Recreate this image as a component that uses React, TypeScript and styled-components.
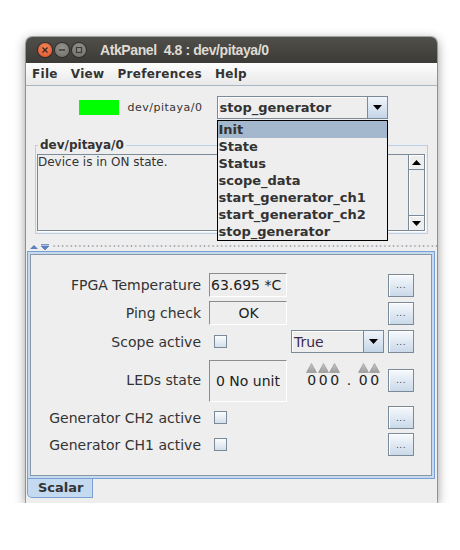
import styled, { createGlobalStyle } from "styled-components";

const GlobalStyle = createGlobalStyle`
  body {
    margin: 0;
    background: #ffffff;
    font-family: "DejaVu Sans", sans-serif;
    color: #333333;
  }
`;

const Window = styled.div`
  margin: 37px 0 0 26px;
  width: 411px;
  height: 466px;
  display: flex;
  flex-direction: column;
  background: #eeeeee;
  border-radius: 6px 6px 0 0;
  box-shadow: 0 0 0 1px rgba(0, 0, 0, 0.28), 0 3px 12px rgba(0, 0, 0, 0.45);
  overflow: hidden;
`;

const TitleBar = styled.div`
  height: 26px;
  flex: none;
  display: flex;
  align-items: center;
  padding-left: 12px;
  background: linear-gradient(#504f4a, #3c3b37);
`;

const WinButton = styled.div<{ $close?: boolean }>`
  width: 14px;
  height: 14px;
  border-radius: 50%;
  margin-right: 3px;
  display: flex;
  align-items: center;
  justify-content: center;
  background: ${(p) =>
    p.$close
      ? "radial-gradient(circle at 50% 35%, #f6875c, #df4f26)"
      : "radial-gradient(circle at 50% 35%, #95948f, #6c6b66)"};
  box-shadow: 0 0 0 1px rgba(0, 0, 0, 0.35);
`;

const Title = styled.div`
  margin-left: 11px;
  font-family: "Liberation Sans", sans-serif;
  font-weight: bold;
  font-size: 14px;
  letter-spacing: -0.4px;
  color: #dfdbd2;
  white-space: pre;
`;

const MenuBar = styled.div`
  height: 22px;
  flex: none;
  display: flex;
  align-items: center;
  gap: 13px;
  padding-left: 6px;
  background: linear-gradient(#fdfdfd, #e9e9e9);
  border-bottom: 1px solid #a9b6c4;
`;

const MenuItem = styled.span`
  font-weight: bold;
  font-size: 12px;
  letter-spacing: 0.3px;
  color: #333333;
`;

const TopPanel = styled.div`
  flex: none;
  padding: 10px 9px 9px 9px;
  display: flex;
  flex-direction: column;
`;

const DeviceRow = styled.div`
  height: 23px;
  padding-left: 4px;
  display: flex;
  align-items: center;
  justify-content: center;
`;

const StateLed = styled.div`
  width: 40px;
  height: 15px;
  background: #00ff00;
  margin-right: 8px;
`;

const DeviceName = styled.span`
  font-size: 11px;
  letter-spacing: 0.5px;
  color: #333333;
  margin-right: 14px;
`;

const Combo = styled.div<{ $width: number }>`
  position: relative;
  width: ${(p) => p.$width}px;
  height: 23px;
  box-sizing: border-box;
  border: 1px solid #7a8a99;
  display: flex;
  background: #eeeeee;
  box-shadow: inset 1px 1px 0 #ffffff;
`;

const ComboText = styled.div<{ $bold?: boolean }>`
  flex: 1;
  display: flex;
  align-items: center;
  padding-left: 2px;
  font-size: ${(p) => (p.$bold ? "13px" : "14px")};
  font-weight: ${(p) => (p.$bold ? "bold" : "normal")};
  color: ${(p) => (p.$bold ? "#333333" : "#3e2a4c")};
`;

const ComboArrow = styled.div`
  width: 19px;
  border-left: 1px solid #7a8a99;
  background: linear-gradient(#f1f5fa, #c3d5e7);
  display: flex;
  align-items: center;
  justify-content: center;
`;

const DropList = styled.ul`
  position: absolute;
  top: 23px;
  left: -1px;
  width: 171px;
  box-sizing: border-box;
  margin: 0;
  padding: 0;
  list-style: none;
  border: 1px solid #000000;
  background: #eeeeee;
  z-index: 5;
`;

const DropItem = styled.li<{ $selected?: boolean }>`
  height: 17px;
  line-height: 17px;
  padding-left: 1px;
  font-weight: bold;
  font-size: 13px;
  color: #333333;
  background: ${(p) => (p.$selected ? "#a3b8cc" : "transparent")};
`;

const StatusBox = styled.fieldset`
  margin: 19px 0 0 0;
  padding: 0 2px 2px 1px;
  border: 1px solid #b8cfe5;
  min-width: 0;
`;

const StatusTitle = styled.legend`
  margin-left: 1px;
  padding: 0 2px;
  font-weight: bold;
  font-size: 12px;
  line-height: 14px;
  color: #333333;
`;

const ScrollPane = styled.div`
  margin-top: 2px;
  height: 77px;
  box-sizing: border-box;
  border: 1px solid #7a8a99;
  box-shadow: 1px 1px 0 #ffffff;
  display: flex;
`;

const StatusText = styled.div`
  flex: 1;
  font-size: 12px;
  line-height: 15px;
  color: #333333;
`;

const ScrollBar = styled.div`
  width: 15px;
  display: flex;
  flex-direction: column;
  border-left: 1px solid #7a8a99;
  background: #eeeeee;
`;

const ScrollButton = styled.div`
  height: 15px;
  box-sizing: border-box;
  border-bottom: 1px solid #7a8a99;
  display: flex;
  align-items: center;
  justify-content: center;
  background: #eeeeee;
  box-shadow: inset 1px 1px 0 #ffffff;
  &:last-child {
    border-bottom: none;
    border-top: 1px solid #7a8a99;
  }
`;

const ScrollTrack = styled.div`
  flex: 1;
  box-shadow: inset 1px 0 0 #ffffff;
`;

const Divider = styled.div`
  height: 8px;
  flex: none;
  display: flex;
  align-items: center;
  padding-left: 4px;
`;

const DividerDots = styled.div`
  flex: 1;
  height: 8px;
  margin-left: 2px;
  background-image: radial-gradient(circle, #9ea6ae 0.7px, transparent 1.1px);
  background-size: 4.3px 8px;
  background-position: 0 -1px;
`;

const TabPane = styled.div`
  flex: none;
  display: flex;
  flex-direction: column;
  margin: 0 2px 0 1px;
`;

const TabContent = styled.div`
  border: 1px solid #7c9fd3;
  padding: 2px;
  background: #c6daef;
`;

const FormPanel = styled.div`
  border: 1px solid #8898a8;
  background: #eeeeee;
  padding: 18px 0 19px 16px;
  display: grid;
  grid-template-columns: 158px 78px 93px 26px;
  grid-template-rows: 24px 24px 25px 44px 23px 23px;
  column-gap: 4px;
  row-gap: 4px;
`;

const AttrLabel = styled.div`
  align-self: center;
  text-align: right;
  padding-right: 4px;
  font-size: 14px;
  color: #333333;
  white-space: nowrap;
`;

const ValueField = styled.div<{ $center?: boolean; $tall?: boolean }>`
  grid-column: 2;
  align-self: ${(p) => (p.$tall ? "end" : "stretch")};
  height: ${(p) => (p.$tall ? "42px" : "auto")};
  box-sizing: border-box;
  border: 1px solid;
  border-color: #8c8c8c #ffffff #ffffff #8c8c8c;
  display: flex;
  align-items: center;
  justify-content: ${(p) => (p.$center ? "center" : "flex-start")};
  padding-left: ${(p) => (p.$tall ? "6px" : "1px")};
  font-size: 14px;
  color: #222222;
  white-space: nowrap;
`;

const CheckBox = styled.div`
  grid-column: 2;
  align-self: center;
  margin-left: 5px;
  width: 13px;
  height: 13px;
  box-sizing: border-box;
  border: 1px solid #7a8a99;
  background: linear-gradient(#fbfcfd, #d4dfea);
`;

const Extra = styled.div`
  grid-column: 3;
  align-self: center;
  display: flex;
`;

const Wheel = styled.div`
  grid-column: 3;
  align-self: start;
  margin: 5px 0 0 15px;
  display: flex;
  align-items: flex-start;
`;

const WheelCell = styled.div<{ $dot?: boolean }>`
  width: ${(p) => (p.$dot ? "17px" : "11.5px")};
  display: flex;
  flex-direction: column;
  align-items: center;
  font-size: 14px;
  line-height: 14px;
  color: #222222;
`;

const DotsButton = styled.div`
  grid-column: 4;
  align-self: center;
  height: 23px;
  box-sizing: border-box;
  border: 1px solid #7a8a99;
  background: linear-gradient(#f6f9fc, #cad9e9);
  box-shadow: inset 1px 1px 0 #ffffff;
  display: flex;
  align-items: center;
  justify-content: center;
  font-size: 9px;
  letter-spacing: 0.5px;
  color: #3a4a5a;
`;

const TabStrip = styled.div`
  display: flex;
`;

const Tab = styled.div`
  width: 66px;
  height: 19px;
  box-sizing: border-box;
  border: 1px solid #7c9fd3;
  border-top: none;
  border-bottom-left-radius: 5px;
  background: #c4daf1;
  padding-left: 10px;
  font-weight: bold;
  font-size: 13px;
  line-height: 17px;
  color: #333333;
`;

const DownArrow = () => (
  <svg width="9" height="5" viewBox="0 0 9 5">
    <path d="M0 0 H9 L4.5 5 Z" fill="#000" />
  </svg>
);

const UpArrow = () => (
  <svg width="9" height="5" viewBox="0 0 9 5">
    <path d="M0 5 H9 L4.5 0 Z" fill="#000" />
  </svg>
);

const WheelArrow = () => (
  <svg width="11" height="10" viewBox="0 0 11 10">
    <defs>
      <linearGradient id="wa" x1="0" y1="0" x2="0" y2="1">
        <stop offset="0" stopColor="#c9c9c9" />
        <stop offset="1" stopColor="#9c9c9c" />
      </linearGradient>
    </defs>
    <path d="M0.5 9.5 H10.5 L5.5 0.5 Z" fill="url(#wa)" stroke="#8e8e8e" strokeWidth="0.6" />
  </svg>
);

const commands = [
  "Init",
  "State",
  "Status",
  "scope_data",
  "start_generator_ch1",
  "start_generator_ch2",
  "stop_generator",
];

const digits = ["0", "0", "0", ".", "0", "0"];

export default function App() {
  return (
    <>
      <GlobalStyle />
      <Window>
        <TitleBar>
          <WinButton $close>
            <svg width="8" height="8" viewBox="0 0 8 8">
              <path d="M1.5 1.5 L6.5 6.5 M6.5 1.5 L1.5 6.5" stroke="#3b2a22" strokeWidth="1.4" />
            </svg>
          </WinButton>
          <WinButton>
            <svg width="8" height="8" viewBox="0 0 8 8">
              <path d="M1 4 H7" stroke="#3c3b37" strokeWidth="1.4" />
            </svg>
          </WinButton>
          <WinButton>
            <svg width="8" height="8" viewBox="0 0 8 8">
              <rect x="1.5" y="1.5" width="5" height="5" fill="none" stroke="#3c3b37" strokeWidth="1.2" />
            </svg>
          </WinButton>
          <Title>{"AtkPanel  4.8 : dev/pitaya/0"}</Title>
        </TitleBar>

        <MenuBar>
          <MenuItem>File</MenuItem>
          <MenuItem>View</MenuItem>
          <MenuItem>Preferences</MenuItem>
          <MenuItem>Help</MenuItem>
        </MenuBar>

        <TopPanel>
          <DeviceRow>
            <StateLed />
            <DeviceName>dev/pitaya/0</DeviceName>
            <Combo $width={171}>
              <ComboText $bold>stop_generator</ComboText>
              <ComboArrow>
                <DownArrow />
              </ComboArrow>
              <DropList>
                {commands.map((c, i) => (
                  <DropItem key={c} $selected={i === 0}>
                    {c}
                  </DropItem>
                ))}
              </DropList>
            </Combo>
          </DeviceRow>

          <StatusBox>
            <StatusTitle>dev/pitaya/0</StatusTitle>
            <ScrollPane>
              <StatusText>Device is in ON state.</StatusText>
              <ScrollBar>
                <ScrollButton>
                  <UpArrow />
                </ScrollButton>
                <ScrollTrack />
                <ScrollButton>
                  <DownArrow />
                </ScrollButton>
              </ScrollBar>
            </ScrollPane>
          </StatusBox>
        </TopPanel>

        <Divider>
          <svg width="20" height="6" viewBox="0 0 20 6">
            <path d="M0 5 H8 L4 1 Z" fill="#5b7fbf" />
            <path d="M11 0.5 H19 M11 2 H19 L15 6 Z" fill="#5b7fbf" stroke="#5b7fbf" strokeWidth="0.8" />
          </svg>
          <DividerDots />
        </Divider>

        <TabPane>
          <TabContent>
            <FormPanel>
              <AttrLabel>FPGA Temperature</AttrLabel>
              <ValueField>63.695 *C</ValueField>
              <DotsButton>...</DotsButton>

              <AttrLabel>Ping check</AttrLabel>
              <ValueField $center>OK</ValueField>
              <DotsButton>...</DotsButton>

              <AttrLabel>Scope active</AttrLabel>
              <CheckBox />
              <Extra>
                <Combo $width={94}>
                  <ComboText>True</ComboText>
                  <ComboArrow>
                    <DownArrow />
                  </ComboArrow>
                </Combo>
              </Extra>
              <DotsButton>...</DotsButton>

              <AttrLabel>LEDs state</AttrLabel>
              <ValueField $tall>0 No unit</ValueField>
              <Wheel>
                {digits.map((d, i) =>
                  d === "." ? (
                    <WheelCell key={i} $dot>
                      <svg width="11" height="10" />
                      <span>.</span>
                    </WheelCell>
                  ) : (
                    <WheelCell key={i}>
                      <WheelArrow />
                      <span>{d}</span>
                    </WheelCell>
                  )
                )}
              </Wheel>
              <DotsButton>...</DotsButton>

              <AttrLabel>Generator CH2 active</AttrLabel>
              <CheckBox />
              <DotsButton>...</DotsButton>

              <AttrLabel>Generator CH1 active</AttrLabel>
              <CheckBox />
              <DotsButton>...</DotsButton>
            </FormPanel>
          </TabContent>
          <TabStrip>
            <Tab>Scalar</Tab>
          </TabStrip>
        </TabPane>
      </Window>
    </>
  );
}
